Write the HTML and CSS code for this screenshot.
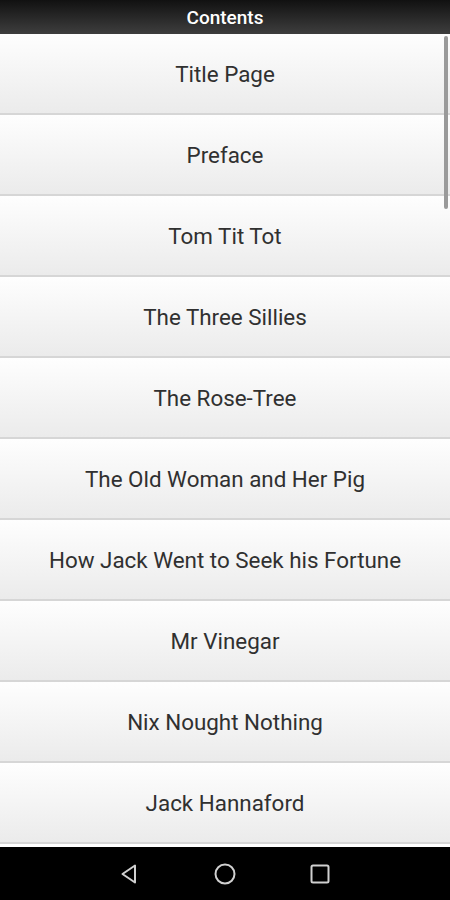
FILE: index.html
```html
<!DOCTYPE html>
<html lang="en">
<head>
    <meta charset="UTF-8">
    <meta name="viewport" content="width=device-width, initial-scale=1.0">
    <title>Contents</title>
    <link rel="stylesheet" href="styles.css">
</head>
<body>
    <div class="page">
        <div class="header">Contents</div>

        <div class="list">
            <ul class="chapters">
                <li class="chapter">Title Page</li>
                <li class="chapter">Preface</li>
                <li class="chapter">Tom Tit Tot</li>
                <li class="chapter">The Three Sillies</li>
                <li class="chapter">The Rose-Tree</li>
                <li class="chapter">The Old Woman and Her Pig</li>
                <li class="chapter">How Jack Went to Seek his Fortune</li>
                <li class="chapter">Mr Vinegar</li>
                <li class="chapter">Nix Nought Nothing</li>
                <li class="chapter">Jack Hannaford</li>
            </ul>
            <div class="scrollbar"></div>
        </div>

        <div class="navbar">
            <svg class="nav-icon" width="24" height="24" viewBox="0 0 24 24">
                <path d="M17 3.5 L17 20.5 L4.5 12 Z" fill="none" stroke="#d0d0d0" stroke-width="2" stroke-linejoin="round"/>
            </svg>
            <svg class="nav-icon" width="24" height="24" viewBox="0 0 24 24">
                <circle cx="12" cy="12" r="9.5" fill="none" stroke="#d0d0d0" stroke-width="2"/>
            </svg>
            <svg class="nav-icon" width="24" height="24" viewBox="0 0 24 24">
                <rect x="3.5" y="3.5" width="17" height="17" rx="1.5" fill="none" stroke="#d0d0d0" stroke-width="2"/>
            </svg>
        </div>
    </div>
</body>
</html>
```

FILE: styles.css
```css
body {
    margin: 0;
    padding: 0;
    font-family: Roboto, "Liberation Sans", sans-serif;
    background-color: #fff;
}
.page {
    width: 450px;
    height: 900px;
    display: flex;
    flex-direction: column;
    overflow: hidden;
}
.header {
    height: 34px;
    line-height: 36px;
    flex-shrink: 0;
    text-align: center;
    color: #fff;
    font-size: 19px;
    font-weight: 500;
    background: linear-gradient(#111, #3e3e3e);
}
.list {
    position: relative;
    flex: 1;
    overflow: hidden;
    border-bottom: 3px solid #fff;
}
.chapters {
    list-style: none;
    margin: 0;
    padding: 0;
}
.chapter {
    height: 79px;
    display: flex;
    align-items: center;
    justify-content: center;
    font-size: 22.4px;
    color: #303030;
    background: linear-gradient(#fefefe, #ebebeb);
    border-bottom: 2px solid #d6d6d6;
}
.scrollbar {
    position: absolute;
    top: 2px;
    right: 2px;
    width: 4px;
    height: 173px;
    border-radius: 2px;
    background-color: #9a9a9a;
}
.navbar {
    height: 53px;
    flex-shrink: 0;
    background-color: #000;
    display: flex;
    align-items: center;
    justify-content: center;
    gap: 71px;
}
.nav-icon {
    display: block;
}
```
